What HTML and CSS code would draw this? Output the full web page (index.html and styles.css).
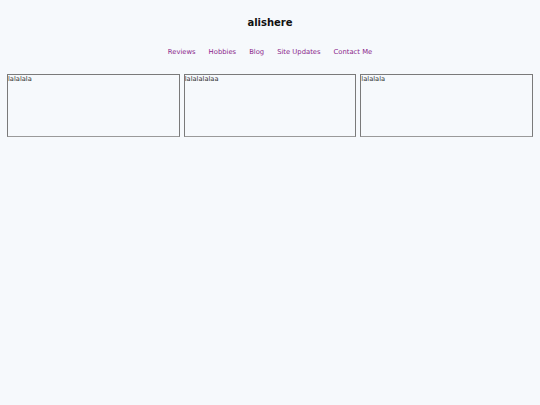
FILE: index.html
```html
<!DOCTYPE html>
<html>
<head>
<meta charset="utf-8">
<link rel="stylesheet" href="styles.css">
</head>
<body>
<header class="site-header">
  <h1 class="site-title">alishere</h1>
  <nav class="site-nav">
    <a href="#">Reviews</a>
    <a href="#">Hobbies</a>
    <a href="#">Blog</a>
    <a href="#">Site Updates</a>
    <a href="#">Contact Me</a>
  </nav>
</header>
<main class="boxes">
  <div class="box">lalalala</div>
  <div class="box">lalalalalaa</div>
  <div class="box">lalalala</div>
</main>
</body>
</html>
```

FILE: styles.css
```css
html, body {
  margin: 0;
  padding: 0;
  background: #f6f9fc;
  font-family: "DejaVu Sans", sans-serif;
}
body {
  padding: 0 7px 0 7px;
}
.site-header {
  text-align: center;
}
.site-title {
  margin: 0;
  padding-top: 16px;
  font-size: 10px;
  line-height: 14px;
  font-weight: bold;
  color: #111;
}
.site-nav {
  margin-top: 18px;
  display: flex;
  justify-content: center;
  gap: 13px;
  font-size: 6.8px;
  line-height: 8px;
}
.site-nav a {
  color: #8b1f8b;
  text-decoration: none;
}
.boxes {
  margin-top: 18px;
  display: flex;
  gap: 4px;
}
.box {
  flex: 1;
  height: 61px;
  border: 1px solid #7a7a7a;
  border-bottom-color: #9a9a9a;
  font-size: 6.7px;
  line-height: 8px;
  color: #333;
  padding: 0;
}
```
